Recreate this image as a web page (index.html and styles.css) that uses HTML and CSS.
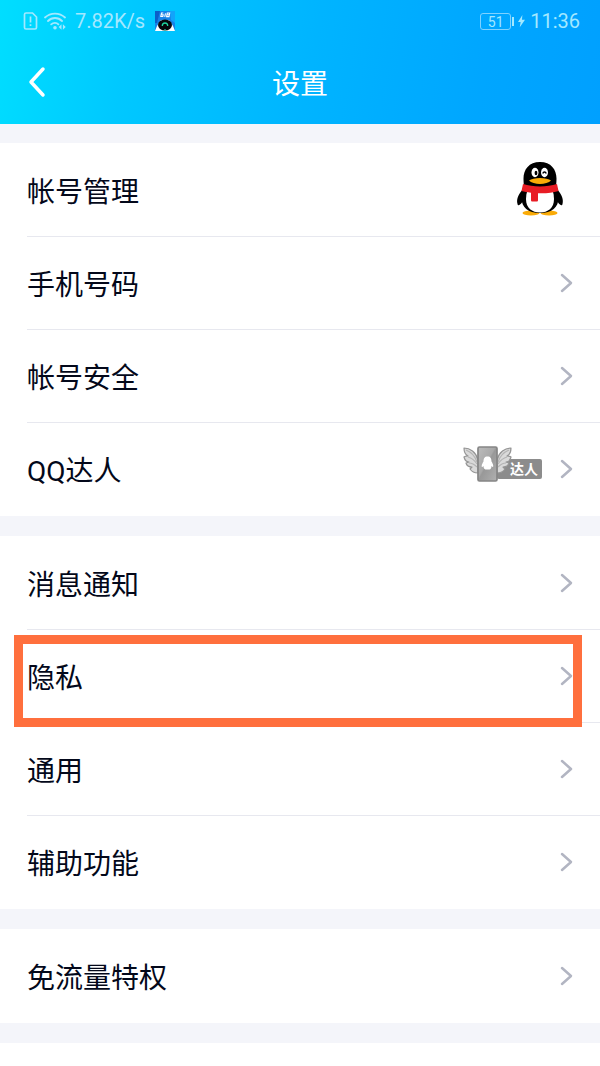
FILE: index.html
```html
<!DOCTYPE html>
<html lang="zh-CN">
<head>
<meta charset="utf-8">
<meta name="viewport" content="width=device-width, initial-scale=1">
<title>设置</title>
<link rel="stylesheet" href="styles.css">
</head>
<body>
<svg class="defs" aria-hidden="true">
  <symbol id="chevron" viewBox="0 0 14 20"><path d="M2 2l9 8-9 8" fill="none" stroke="#b2b5c2" stroke-width="2.500" stroke-linecap="round" stroke-linejoin="round"/></symbol>
</svg>
<header class="header">
  <div class="status">
    <svg class="sim" viewBox="0 0 14 18"><path d="M2.500 1h6.500l4 4v10.500a1.500 1.500 0 0 1-1.500 1.500h-9a1.500 1.500 0 0 1-1.500-1.500v-13A1.500 1.500 0 0 1 2.500 1z" fill="none" stroke="currentColor" stroke-width="1.700"/><path d="M7 4.500v6M7 12.200v1.900" stroke="currentColor" stroke-width="1.700"/></svg>
    <svg class="wifi" viewBox="0 0 22 18"><g fill="none" stroke="currentColor" stroke-width="1.800" stroke-linecap="round"><path d="M1 5.500c5.500-5.300 14.500-5.300 20 0M4 9c4-4 10-4 14 0M7.200 12.300c2.200-2 5.400-2 7.200 0"/></g><circle cx="11" cy="15.800" r="1.800" fill="currentColor"/><path d="M17.500 12.300v5.500L14.700 15zM18.900 12.300v5.500L21.700 15z" fill="currentColor"/></svg>
    <span class="speed">7.82K/s</span>
    <svg class="app" viewBox="0 0 20 20"><path d="M0 0h20v20H0z" fill="#1684e8"/><path d="M0 0h5L2 12H0z" fill="#0b5fc8"/><path d="M15 0h5v12l-4-3z" fill="#12a4fa"/><path d="M0 20l2-5 4-6h8l4 6 2 5z" fill="#fff"/><ellipse cx="10" cy="14" rx="7" ry="5.500" fill="#05080c"/><path d="M7.300 15c0-4 5.400-4 5.400 0" fill="none" stroke="#20d6a0" stroke-width="1.300"/><path d="M9 18.900h2" stroke="#20d6a0"/><path d="M8.300 2H6.500L5.800 5.500h2L8.200 3.700H6.300M10.500 2.300L9.700 5.800M12.300 2h2.400l-.7 3.600h-2.400zM12 3.800h2.300" fill="none" stroke="#fff" stroke-width="1.100"/></svg>
    <span class="battery">51</span>
    <svg class="bolt" viewBox="0 0 8 14"><path d="M5 0L0 8h3L2 14l6-8.500H4.500z" fill="currentColor"/></svg>
    <span class="clock">11:36</span>
  </div>
  <div class="titlebar">
    <button class="back" aria-label="返回"><svg viewBox="0 0 18 32"><path d="M15 3L3 16l12 13" fill="none" stroke="#fff" stroke-width="3.500" stroke-linecap="round" stroke-linejoin="round"/></svg></button>
    <h1 class="title">设置</h1>
  </div>
</header>
<main class="list">
  <section class="group">
    <button class="row"><span class="label">帐号管理</span>
      <svg class="avatar" viewBox="0 0 48 54"><ellipse cx="15" cy="51" rx="8.500" ry="2.500" fill="#faab07"/><ellipse cx="33" cy="51" rx="8.500" ry="2.500" fill="#faab07"/><path d="M8 26C3 31 0 37 1.500 42c.5 3 4 0 6-4zM40 26c5 5 8 11 6.500 16-.5 3-4 0-6-4z" fill="#000"/><path d="M24 0C13 0 7.500 7.500 7.500 16.500c0 3 .2 5 .3 6.500C6 28 5.500 32 5.500 36 5.500 45 12 51 24 51s18.500-6 18.500-15c0-4-.5-8-2.300-13 .1-1.500.3-3.500.3-6.500C40.500 7.500 35 0 24 0z" fill="#000"/><path d="M11.500 28h25c1 3 1.500 6 1.500 9 0 9-6 13.500-14 13.500S10 46 10 37c0-3 .5-6 1.500-9z" fill="#fff"/><path d="M7 22c10 3.200 24 3.200 34 0l1.500 7c-5 1.700-11 2.300-17 2.300h-3.500v6.700c0 1-.5 1.500-1.500 1.500h-4c-1 0-1.500-.5-1.500-1.500v-7.300c-4-.4-6.500-1-9.500-1.700z" fill="#e81c24"/><ellipse cx="19" cy="10.500" rx="3.500" ry="4.700" fill="#fff"/><ellipse cx="28.500" cy="10.500" rx="3.500" ry="4.700" fill="#fff"/><ellipse cx="20" cy="11" rx="1.400" ry="2.200" fill="#000"/><path d="M26.800 11.500c.6-2 2.800-2 3.400 0" fill="none" stroke="#000" stroke-width="1.400"/><path d="M13 18.500c4-3.500 18-3.500 22 0-4 4.500-18 4.500-22 0z" fill="#faab07"/></svg>
    </button>
    <button class="row"><span class="label">手机号码</span><svg class="arrow"><use href="#chevron"/></svg></button>
    <button class="row"><span class="label">帐号安全</span><svg class="arrow"><use href="#chevron"/></svg></button>
    <button class="row"><span class="label">QQ达人</span>
      <span class="badge">
        <svg class="wings" viewBox="0 0 50 36"><defs><linearGradient id="metal" x1="0" y1="0" x2="1" y2="1"><stop offset="0" stop-color="#bcbcbc"/><stop offset=".45" stop-color="#a8a8a8"/><stop offset=".5" stop-color="#989898"/><stop offset="1" stop-color="#b0b0b0"/></linearGradient></defs><g id="wing" fill="#dadada" stroke="#959595" stroke-width="1.200" stroke-linejoin="round"><path d="M15 14C13 6 7 2 1 2c0 5 2 7 4 8-2 0-3 0-4 1 1 4 3 5 5 5l-3 1c1 4 4 4 6 4l-2 2c2 3 5 4 8 4z"/><path d="M3 4c5 2 9 6 11 12M5 11c4 1 7 4 9 7M6 17c3 0 6 2 8 4" fill="none" stroke="#b4b4b4"/></g><use href="#wing" transform="matrix(-1 0 0 1 49 0)"/><rect x="15" y="1" width="19" height="34" rx="1.500" fill="url(#metal)" stroke="#858585" stroke-width="1.700"/><path d="M24.500 10.500c-3 0-4 2-4 5-2 3-2.200 5.500-1.200 5.500l1.200-1c0 2 1 3.500 2 3.500h4c1 0 2-1.500 2-3.500l1.200 1c1 0 .8-2.500-1.200-5.500 0-3-1-5-4-5z" fill="#fff"/></svg>
        <span class="badge-text">达人</span>
      </span>
      <svg class="arrow"><use href="#chevron"/></svg>
    </button>
  </section>
  <section class="group">
    <button class="row"><span class="label">消息通知</span><svg class="arrow"><use href="#chevron"/></svg></button>
    <button class="row marked"><span class="label">隐私</span><svg class="arrow"><use href="#chevron"/></svg></button>
    <button class="row"><span class="label">通用</span><svg class="arrow"><use href="#chevron"/></svg></button>
    <button class="row"><span class="label">辅助功能</span><svg class="arrow"><use href="#chevron"/></svg></button>
  </section>
  <section class="group">
    <button class="row"><span class="label">免流量特权</span><svg class="arrow"><use href="#chevron"/></svg></button>
  </section>
  <section class="group rest"></section>
</main>
</body>
</html>
```
FILE: styles.css
```css
* {
  box-sizing: border-box;
}

body {
  display: flex;
  flex-direction: column;
  min-height: 100vh;
  margin: 0;
  background: #f4f5fa;
  font-family: Roboto, "Noto Sans CJK SC", sans-serif;
  color: #03081a;
}

svg {
  flex: none;
  display: block;
}

button {
  margin: 0;
  padding: 0;
  border: 0;
  background: none;
  font: inherit;
  color: inherit;
  text-align: left;
}

.defs {
  position: absolute;
  width: 0;
  height: 0;
}

.header {
  padding-bottom: 8px;
  background: linear-gradient(100deg, #00deff 0%, #00c8ff 22%, #00b4ff 52%, #00a6ff 80%, #00a0ff 100%);
}

.status {
  display: flex;
  align-items: center;
  height: 40px;
  padding: 2px 20px 0 23px;
  font-size: 20px;
  line-height: 24px;
  color: #a3e8ff;
}

.sim {
  width: 15px;
  height: 18px;
}

.wifi {
  width: 22px;
  height: 18px;
  margin-left: 6px;
}

.speed {
  margin-left: 9px;
}

.app {
  width: 20px;
  height: 20px;
  margin-left: 10px;
}

.battery {
  position: relative;
  width: 31px;
  height: 17px;
  margin-left: auto;
  border: 1px solid #7fd2ff;
  border-radius: 3px;
  font-size: 14px;
  line-height: 16px;
  text-align: center;
}

.battery::after {
  content: "";
  position: absolute;
  top: 3px;
  right: -4px;
  width: 2px;
  height: 9px;
  background: #a3e8ff;
}

.bolt {
  width: 7px;
  height: 14px;
  margin: 0 5px 0 7px;
}

.titlebar {
  display: grid;
  grid-template-columns: 80px 1fr 80px;
  align-items: center;
  height: 76px;
  padding-top: 8px;
}

.back {
  padding-left: 28px;
}

.back svg {
  width: 18px;
  height: 32px;
}

.title {
  margin: 0;
  padding-top: 5px;
  font-size: 28px;
  font-weight: 400;
  line-height: 40px;
  text-align: center;
  color: #fff;
}

.list {
  display: flex;
  flex: 1;
  flex-direction: column;
  gap: 20px;
  padding-top: 19px;
}

.group {
  padding-bottom: 1px;
  background: #fff;
}

.rest {
  flex: 1;
  min-height: 23px;
}

.row {
  position: relative;
  display: flex;
  align-items: center;
  width: 100%;
  height: 93px;
  padding: 0 26px 0 27px;
}

.row + .row::before {
  content: "";
  position: absolute;
  top: 0;
  left: 27px;
  right: 0;
  height: 1px;
  background: #e7e8ef;
}

.marked::after {
  content: "";
  position: absolute;
  z-index: 1;
  top: 6px;
  right: 18px;
  bottom: -5px;
  left: 14px;
  border: 9px solid #ff6f3d;
}

.label {
  flex: 1;
  padding-top: 7px;
  font-size: 28px;
  line-height: 40px;
}

.avatar {
  width: 48px;
  height: 54px;
  margin: 0 10px 2px 0;
}

.arrow {
  width: 14px;
  height: 20px;
}

.badge {
  display: flex;
  align-items: center;
  margin-right: 18px;
}

.wings {
  position: relative;
  z-index: 1;
  width: 50px;
  height: 36px;
  margin-top: -10px;
}

.badge-text {
  margin-left: -16px;
  padding: 0 4px 0 13px;
  border-radius: 2px;
  background: #8c8c8c;
  font-size: 14px;
  font-weight: 700;
  line-height: 20px;
  color: #fff;
}
```
